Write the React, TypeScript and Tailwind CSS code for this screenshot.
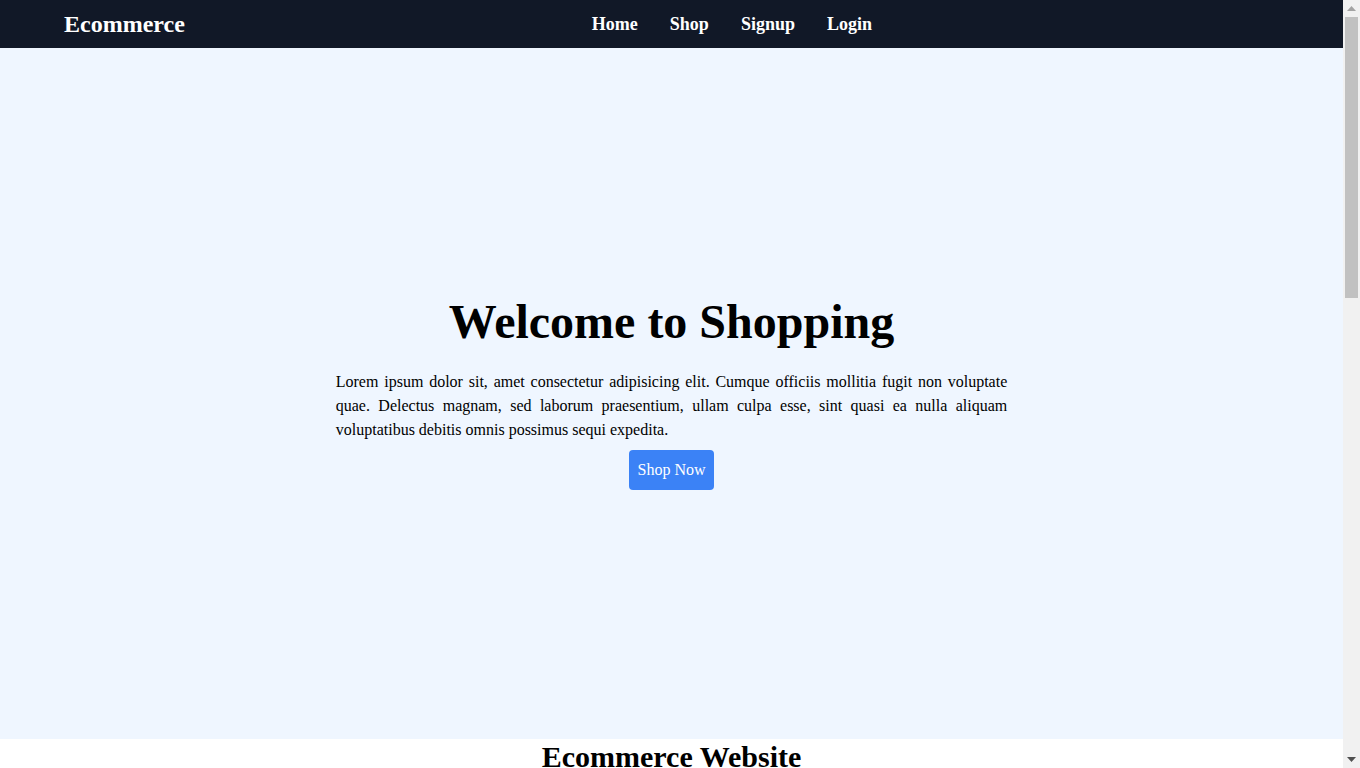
import React from 'react';

const Navbar: React.FC = () => {
  return (
    <nav className="bg-[#111827] text-white h-12 px-16 flex items-center justify-between">
      <a href="#" className="text-2xl font-bold">Ecommerce</a>
      <ul className="flex gap-8 text-lg font-bold">
        <li><a href="#">Home</a></li>
        <li><a href="#">Shop</a></li>
        <li><a href="#">Signup</a></li>
        <li><a href="#">Login</a></li>
      </ul>
      <div></div>
    </nav>
  );
};

const Hero: React.FC = () => {
  return (
    <section className="bg-[#eff6ff] h-[90vh] flex flex-col items-center justify-center">
      <h1 className="text-5xl font-bold mb-6">Welcome to Shopping</h1>
      <p className="w-1/2 text-justify text-base leading-6">
        Lorem ipsum dolor sit, amet consectetur adipisicing elit. Cumque officiis mollitia fugit non voluptate quae. Delectus magnam, sed laborum praesentium, ullam culpa esse, sint quasi ea nulla aliquam voluptatibus debitis omnis possimus sequi expedita.
      </p>
      <button className="mt-2 bg-[#3b82f6] text-white px-2 py-2 rounded-sm text-base leading-6">Shop Now</button>
    </section>
  );
};

// window scrollbar as the browser draws it
const Scrollbar: React.FC = () => {
  return (
    <div className="fixed top-0 right-0 h-screen w-[17px] bg-[#f1f1f1] flex flex-col items-center">
      <div className="h-[17px] flex items-center justify-center">
        <svg width="9" height="5" viewBox="0 0 9 5"><path d="M4.5 0 L9 5 L0 5 Z" fill="#a3a3a3" /></svg>
      </div>
      <div className="w-[13px] h-[281px] bg-[#c1c1c1]"></div>
      <div className="flex-1"></div>
      <div className="h-[17px] flex items-center justify-center">
        <svg width="9" height="5" viewBox="0 0 9 5"><path d="M0 0 L9 0 L4.5 5 Z" fill="#505050" /></svg>
      </div>
    </div>
  );
};

const App: React.FC = () => {
  return (
    <div className="bg-white text-black font-['Liberation_Serif','Times_New_Roman',serif]">
      <div className="w-[calc(100%-17px)]">
        <Navbar />
        <Hero />
        <section className="min-h-[1267px]">
          <h2 className="text-3xl font-bold text-center">Ecommerce Website</h2>
        </section>
      </div>
      <Scrollbar />
    </div>
  );
};

export default App;
